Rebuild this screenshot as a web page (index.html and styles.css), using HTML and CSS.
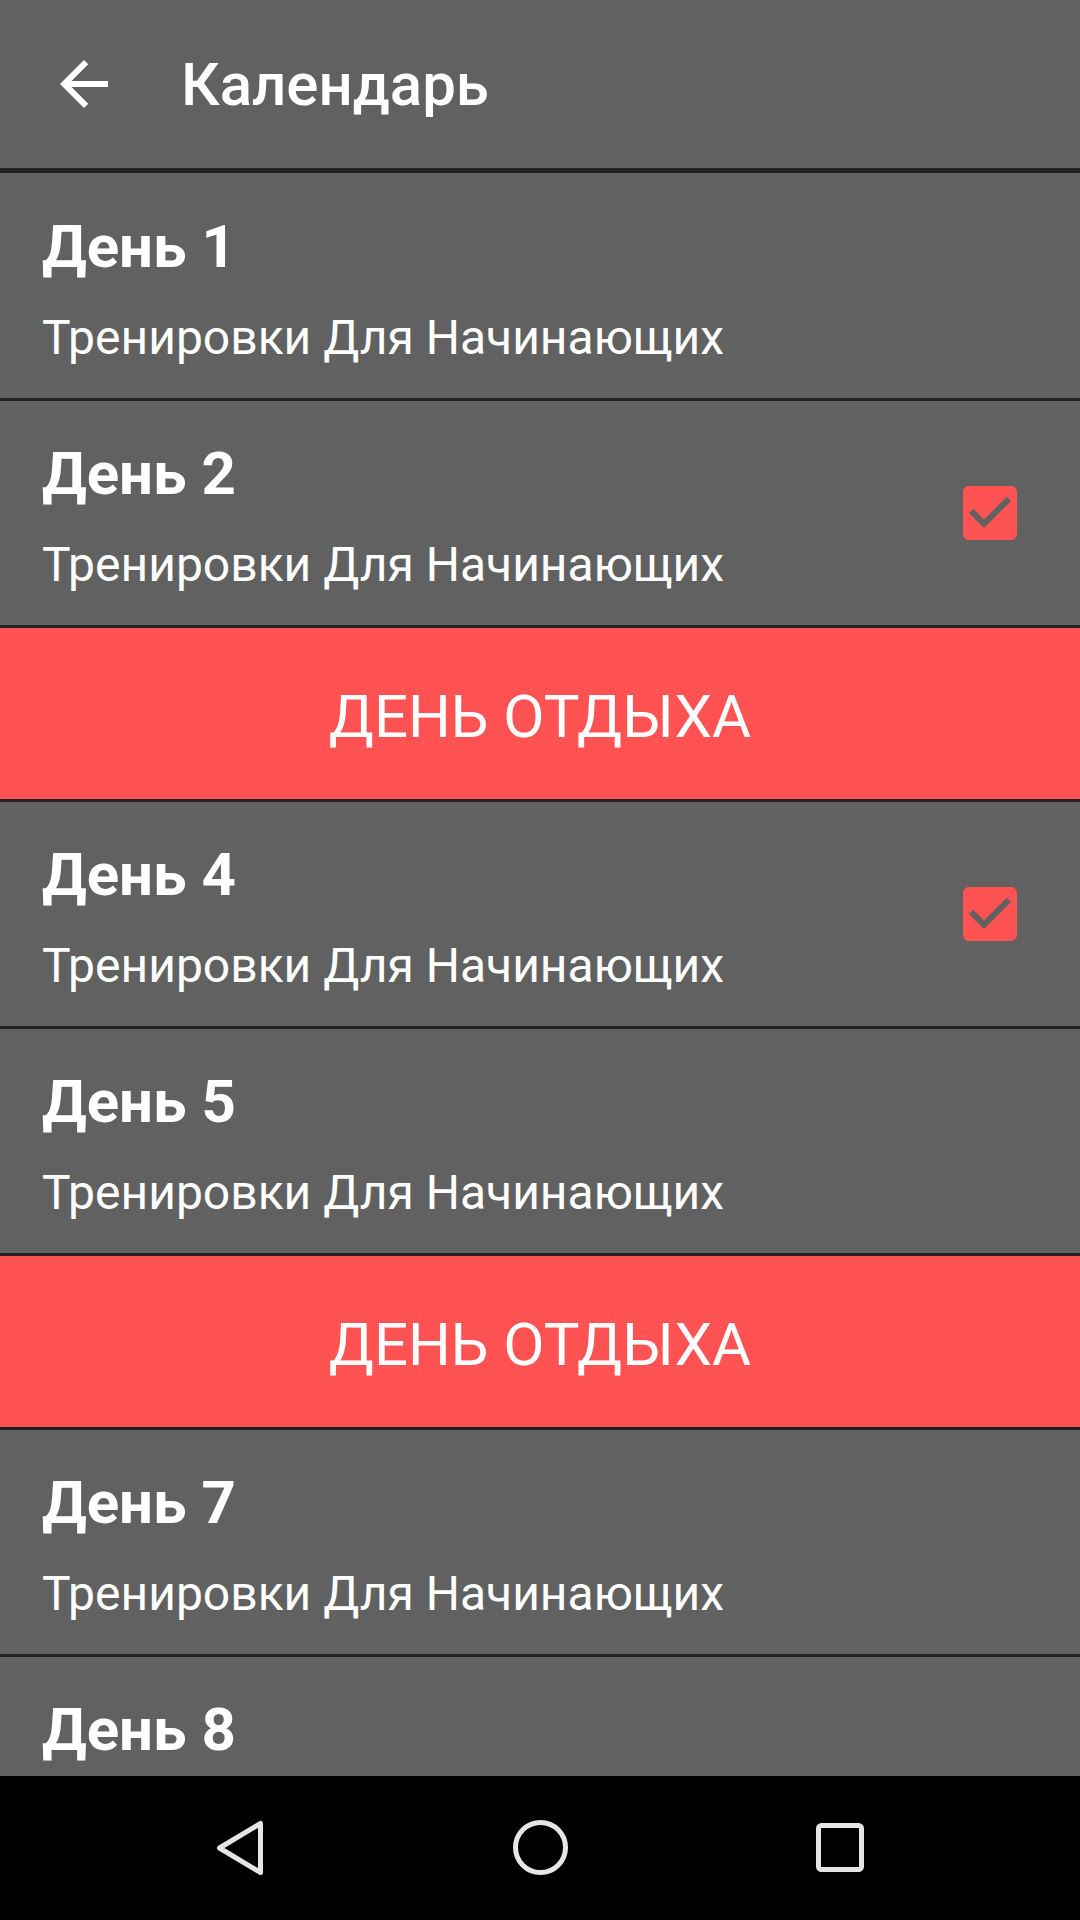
FILE: index.html
```html
<!DOCTYPE html>
<html lang="ru">

<head>
    <meta charset="UTF-8">
    <title>Календарь</title>
    <link rel="stylesheet" href="styles.css">
</head>

<body>
    <div class="app">
        <header class="toolbar">
            <svg class="back" viewBox="0 0 24 24" width="72" height="72">
                <path fill="#fff" d="M20 11H7.83l5.59-5.59L12 4l-8 8 8 8 1.41-1.41L7.83 13H20v-2z" />
            </svg>
            <h1>Календарь</h1>
        </header>

        <ul class="days">
            <li class="day">
                <div class="day-text">
                    <h2>День 1</h2>
                    <p>Тренировки Для Начинающих</p>
                </div>
            </li>
            <li class="day">
                <div class="day-text">
                    <h2>День 2</h2>
                    <p>Тренировки Для Начинающих</p>
                </div>
                <svg class="check" viewBox="0 0 24 24" width="72" height="72">
                    <path fill="#ff5252" fill-rule="evenodd" d="M19 3H5c-1.11 0-2 .9-2 2v14c0 1.1.89 2 2 2h14c1.11 0 2-.9 2-2V5c0-1.1-.89-2-2-2zm-9 14l-5-5 1.41-1.41L10 14.17l7.59-7.59L19 8l-9 9z" />
                </svg>
            </li>
            <li class="rest">ДЕНЬ ОТДЫХА</li>
            <li class="day">
                <div class="day-text">
                    <h2>День 4</h2>
                    <p>Тренировки Для Начинающих</p>
                </div>
                <svg class="check" viewBox="0 0 24 24" width="72" height="72">
                    <path fill="#ff5252" fill-rule="evenodd" d="M19 3H5c-1.11 0-2 .9-2 2v14c0 1.1.89 2 2 2h14c1.11 0 2-.9 2-2V5c0-1.1-.89-2-2-2zm-9 14l-5-5 1.41-1.41L10 14.17l7.59-7.59L19 8l-9 9z" />
                </svg>
            </li>
            <li class="day">
                <div class="day-text">
                    <h2>День 5</h2>
                    <p>Тренировки Для Начинающих</p>
                </div>
            </li>
            <li class="rest">ДЕНЬ ОТДЫХА</li>
            <li class="day">
                <div class="day-text">
                    <h2>День 7</h2>
                    <p>Тренировки Для Начинающих</p>
                </div>
            </li>
            <li class="day">
                <div class="day-text">
                    <h2>День 8</h2>
                    <p>Тренировки Для Начинающих</p>
                </div>
            </li>
        </ul>

        <nav class="navbar">
            <svg viewBox="0 0 72 72" width="72" height="72">
                <path d="M15.5 36L56.5 11.5V60.5Z" />
            </svg>
            <svg viewBox="0 0 72 72" width="72" height="72">
                <circle cx="36.5" cy="35.5" r="25" />
            </svg>
            <svg viewBox="0 0 72 72" width="72" height="72">
                <rect x="14.5" y="13.5" width="43" height="44" rx="3" />
            </svg>
        </nav>
    </div>
</body>

</html>
```

FILE: styles.css
```css
* {
    margin: 0;
    padding: 0;
}

body {
    background-color: #616161;
    font-family: Roboto, "Noto Sans", sans-serif;
    color: #fff;
}

.app {
    width: 1080px;
    height: 1920px;
    display: flex;
    flex-direction: column;
    overflow: hidden;
}

/* шапка */
.toolbar {
    height: 168px;
    flex-shrink: 0;
    display: flex;
    align-items: center;
    border-bottom: 5px solid #222;
}

.toolbar .back {
    margin-left: 48px;
}

.toolbar h1 {
    margin-left: 61px;
    padding-top: 2px;
    font-size: 60px;
    font-weight: 500;
    line-height: 70px;
}

/* список дней */
.days {
    flex: 1;
    list-style: none;
    overflow: hidden;
    padding-top: 1px;
}

.day {
    height: 224px;
    display: flex;
    border-bottom: 3px solid #222;
}

.day-text {
    flex: 1;
    padding: 38px 0 0 42px;
}

.day-text h2 {
    font-size: 60px;
    font-weight: 700;
    line-height: 70px;
}

.day-text p {
    margin-top: 28px;
    font-size: 48px;
    line-height: 56px;
}

.check {
    align-self: center;
    margin-right: 54px;
}

.rest {
    height: 174px;
    display: flex;
    align-items: center;
    justify-content: center;
    padding-top: 6px;
    box-sizing: border-box;
    border-bottom: 3px solid #222;
    background-color: #ff5252;
    font-size: 60px;
    line-height: 70px;
}

/* системная панель */
.navbar {
    height: 144px;
    flex-shrink: 0;
    display: grid;
    grid-template-columns: repeat(3, 300px);
    padding: 0 90px;
    align-items: center;
    justify-items: center;
    background-color: #000;
}

.navbar svg * {
    fill: none;
    stroke: #e6e6e6;
    stroke-width: 5;
    stroke-linejoin: round;
}
```
